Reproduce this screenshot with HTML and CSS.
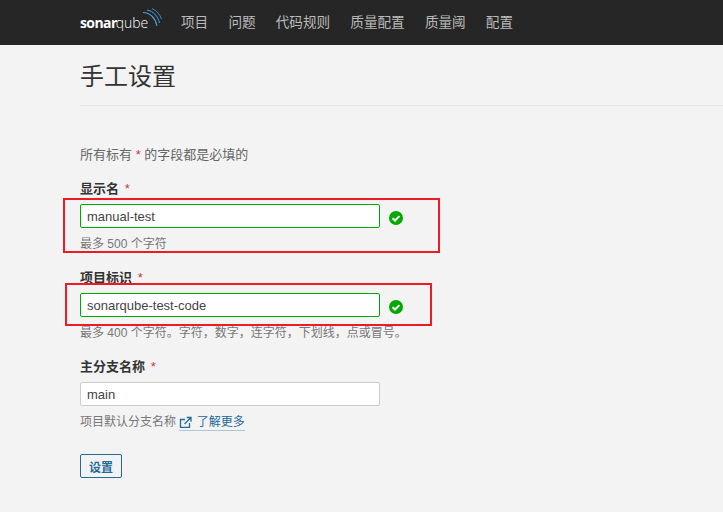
FILE: index.html
```html
<!DOCTYPE html>
<html lang="zh-CN">
<head>
<meta charset="utf-8">
<title>手工设置</title>
<link rel="stylesheet" href="styles.css">
</head>
<body>
<header class="navbar">
  <a class="logo"><b>sonar</b><span>qube</span>
    <svg class="logo-waves" width="20" height="28" viewBox="0 0 20 28" fill="none" stroke="#4b9fd5">
      <path d="M0 5.500C7 5.500 12.500 11 14 19" stroke-width="1.100"/>
      <path d="M4 3C10.500 4 15 9.500 16.500 16" stroke-width="1"/>
      <path d="M9 1.500C13.500 3.500 17 7.500 18.500 12" stroke-width=".8"/>
    </svg>
  </a>
  <nav class="menu">
    <a>项目</a><a>问题</a><a>代码规则</a><a>质量配置</a><a>质量阈</a><a>配置</a>
  </nav>
</header>
<main class="page">
  <h1 class="title">手工设置</h1>
  <form class="form">
    <p class="legend">所有标有 <em>*</em> 的字段都是必填的</p>
    <div class="field">
      <label class="label">显示名 <em>*</em></label>
      <div class="control">
        <input class="input valid" value="manual-test">
        <svg class="ok" width="14" height="14" viewBox="0 0 14 14"><circle cx="7" cy="7" r="7" fill="#00aa00"/><path d="M3.600 7.200 6 9.500l4.400-4.400" fill="none" stroke="#fff" stroke-width="2"/></svg>
      </div>
      <p class="hint">最多 500 个字符</p>
      <div class="mark mark-one"></div>
    </div>
    <div class="field">
      <label class="label">项目标识 <em>*</em></label>
      <div class="control">
        <input class="input valid" value="sonarqube-test-code">
        <svg class="ok" width="14" height="14" viewBox="0 0 14 14"><circle cx="7" cy="7" r="7" fill="#00aa00"/><path d="M3.600 7.200 6 9.500l4.400-4.400" fill="none" stroke="#fff" stroke-width="2"/></svg>
      </div>
      <p class="hint">最多 400 个字符。字符，数字，连字符，下划线，点或冒号。</p>
      <div class="mark mark-two"></div>
    </div>
    <div class="field">
      <label class="label">主分支名称 <em>*</em></label>
      <div class="control">
        <input class="input" value="main">
      </div>
      <p class="hint">项目默认分支名称 <a class="link"><svg width="14" height="14" viewBox="0 0 14 14" fill="none" stroke="#236a97" stroke-width="1.300"><path d="M10.500 8v4.300H1.500V4.500H6"/><path d="M5.500 9 11.500 3M7.800 2.500h4.200v4.200"/></svg> 了解更多</a></p>
    </div>
    <button class="button" type="button">设置</button>
  </form>
</main>
</body>
</html>
```
FILE: styles.css
```css
* { box-sizing: border-box; }
html, body { margin: 0; height: 100%; }
body {
  background: #f3f3f3;
  color: #333;
  font: 13px/18px "Liberation Sans", "Noto Sans CJK SC", sans-serif;
  overflow: hidden;
}
.navbar {
  height: 45px;
  background: #262626;
  display: flex;
  align-items: center;
  padding-left: 80px;
}
.logo {
  position: relative;
  display: flex;
  width: 101px;
  color: #fff;
  font: 14px/20px "Open Sans", sans-serif;
}
.logo b { font-weight: 700; letter-spacing: -.6px; }
.logo span { font-weight: 300; margin-left: -1px; }
.logo-waves { position: absolute; left: 63px; top: -6px; }
.menu { display: flex; gap: 20.200px; color: #bbb; font-size: 13.600px; }
.page { padding: 0 0 0 80px; }
.title {
  margin: 0;
  padding: 17px 0 13px;
  border-bottom: 1px solid #e6e6e6;
  font-size: 24px;
  line-height: 30px;
  font-weight: 400;
  height: 61px;
}
.form { padding-top: 40px; }
.legend { margin: 0 0 16px; color: #666; }
em { color: #d4333f; font-style: normal; }
.field { position: relative; margin-bottom: 16px; }
.label { display: block; font-weight: 700; height: 24px; line-height: 18px; }
.label em { font-weight: 400; margin-left: 2px; }
.control { display: flex; align-items: center; gap: 9px; }
.input {
  width: 300px;
  height: 24px;
  padding: 0 6px;
  border: 1px solid #ccc;
  border-radius: 2px;
  background: #fff;
  color: #444;
  font: 13px "Liberation Sans", sans-serif;
}
.input.valid { border-color: #00aa00; }
.ok { margin-top: 4px; }
.hint { margin: 7px 0 0; color: #777; font-size: 12px; line-height: 18px; }
.link {
  color: #236a97;
  border-bottom: 1px solid #aac7dc;
  padding-bottom: 1px;
}
.link svg { vertical-align: -3px; }
.button {
  display: block;
  margin-top: 23px;
  height: 24px;
  width: 42px;
  padding: 0;
  background: transparent;
  border: 1px solid #236a97;
  border-radius: 2px;
  color: #236a97;
  font: 700 12px "Liberation Sans", "Noto Sans CJK SC", sans-serif;
}
.mark { position: absolute; border: 2px solid #ed1c24; pointer-events: none; }
.mark-one { left: -17px; top: 18px; width: 377px; height: 55px; }
.mark-two { left: -15px; top: 14px; width: 367px; height: 43px; }
```
